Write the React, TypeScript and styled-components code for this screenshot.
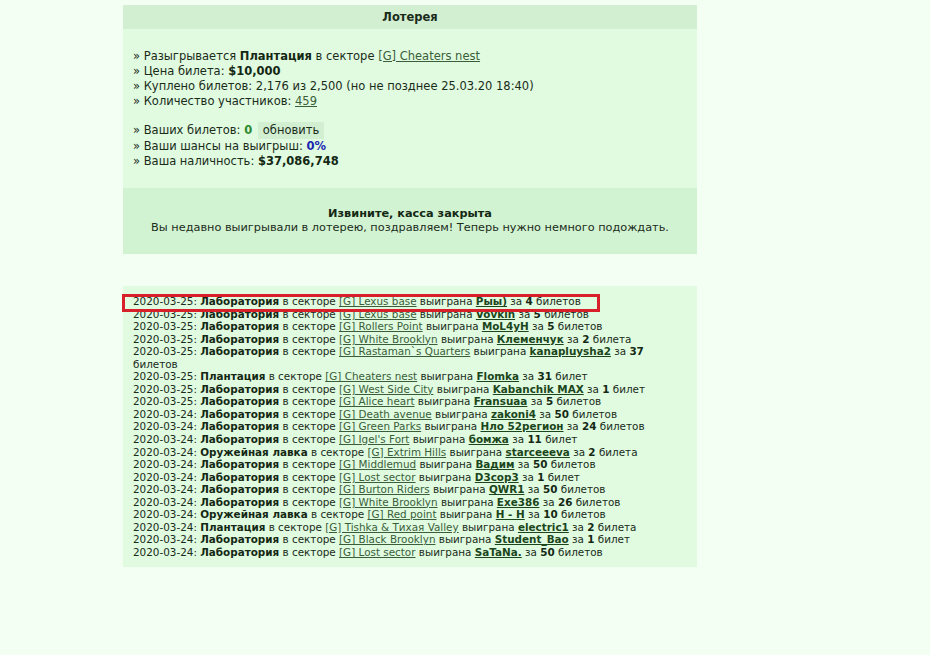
import styled, { createGlobalStyle } from "styled-components";

type Win = {
  date: string;
  building: string;
  sector: string;
  winner: string;
  tickets: number;
  word: string;
};

const wins: Win[] = [
  { date: "2020-03-25", building: "Лаборатория", sector: "[G] Lexus base", winner: "Рыы)", tickets: 4, word: "билетов" },
  { date: "2020-03-25", building: "Лаборатория", sector: "[G] Lexus base", winner: "Vovkin", tickets: 5, word: "билетов" },
  { date: "2020-03-25", building: "Лаборатория", sector: "[G] Rollers Point", winner: "MoL4yH", tickets: 5, word: "билетов" },
  { date: "2020-03-25", building: "Лаборатория", sector: "[G] White Brooklyn", winner: "Клеменчук", tickets: 2, word: "билета" },
  { date: "2020-03-25", building: "Лаборатория", sector: "[G] Rastaman`s Quarters", winner: "kanapluysha2", tickets: 37, word: "билетов" },
  { date: "2020-03-25", building: "Плантация", sector: "[G] Cheaters nest", winner: "Flomka", tickets: 31, word: "билет" },
  { date: "2020-03-25", building: "Лаборатория", sector: "[G] West Side City", winner: "Kabanchik MAX", tickets: 1, word: "билет" },
  { date: "2020-03-25", building: "Лаборатория", sector: "[G] Alice heart", winner: "Fransuaa", tickets: 5, word: "билетов" },
  { date: "2020-03-24", building: "Лаборатория", sector: "[G] Death avenue", winner: "zakoni4", tickets: 50, word: "билетов" },
  { date: "2020-03-24", building: "Лаборатория", sector: "[G] Green Parks", winner: "Нло 52регион", tickets: 24, word: "билетов" },
  { date: "2020-03-24", building: "Лаборатория", sector: "[G] Igel's Fort", winner: "бомжа", tickets: 11, word: "билет" },
  { date: "2020-03-24", building: "Оружейная лавка", sector: "[G] Extrim Hills", winner: "starceeeva", tickets: 2, word: "билета" },
  { date: "2020-03-24", building: "Лаборатория", sector: "[G] Middlemud", winner: "Вадим", tickets: 50, word: "билетов" },
  { date: "2020-03-24", building: "Лаборатория", sector: "[G] Lost sector", winner: "D3cop3", tickets: 1, word: "билет" },
  { date: "2020-03-24", building: "Лаборатория", sector: "[G] Burton Riders", winner: "QWR1", tickets: 50, word: "билетов" },
  { date: "2020-03-24", building: "Лаборатория", sector: "[G] White Brooklyn", winner: "Exe386", tickets: 26, word: "билетов" },
  { date: "2020-03-24", building: "Оружейная лавка", sector: "[G] Red point", winner: "H - H", tickets: 10, word: "билетов" },
  { date: "2020-03-24", building: "Плантация", sector: "[G] Tishka & Тихая Valley", winner: "electric1", tickets: 2, word: "билета" },
  { date: "2020-03-24", building: "Лаборатория", sector: "[G] Black Brooklyn", winner: "Student_Bao", tickets: 1, word: "билет" },
  { date: "2020-03-24", building: "Лаборатория", sector: "[G] Lost sector", winner: "SaTaNa.", tickets: 50, word: "билетов" },
];

const GlobalStyle = createGlobalStyle`
  body {
    margin: 0;
    background: #f4fff4;
    font-family: Verdana, "DejaVu Sans", sans-serif;
    color: #1a2b1a;
  }
`;

const Page = styled.div`
  width: 574px;
  margin: 5px 0 0 123px;
  display: flex;
  flex-direction: column;
  gap: 32px;
`;

const Panel = styled.div`
  background: #e0fbe0;
`;

const Header = styled.div`
  background: #d2efd2;
  height: 24px;
  line-height: 24px;
  text-align: center;
  font-weight: bold;
  font-size: 11.5px;
`;

const Info = styled.div`
  padding: 20px 10px 19px;
  font-size: 11.5px;
  line-height: 15px;
`;

const Gap = styled.div`
  height: 13px;
`;

const Line = styled.div<{ $tall?: boolean }>`
  line-height: ${(p) => (p.$tall ? "17px" : "inherit")};
`;

const Bold = styled.b<{ $color?: string }>`
  color: ${(p) => p.$color || "#142814"};
`;

const Link = styled.a<{ $strong?: boolean }>`
  color: ${(p) => (p.$strong ? "#1b461b" : "#3a5e3a")};
  font-weight: ${(p) => (p.$strong ? "bold" : "normal")};
  text-decoration: underline;
  cursor: pointer;
`;

const RefreshButton = styled.span`
  display: inline-block;
  background: #d2efd2;
  padding: 0 5px;
  margin-left: 2px;
  line-height: 17px;
`;

const Closed = styled.div`
  background: #d2f3d2;
  padding: 19px 10px;
  text-align: center;
  font-size: 11.3px;
  line-height: 14px;
`;

const ListPanel = styled(Panel)`
  position: relative;
  padding: 9px 10px;
  font-size: 10.4px;
  line-height: 12.55px;
`;

const Marker = styled.div`
  position: absolute;
  left: -1px;
  top: 8px;
  width: 478px;
  height: 18px;
  border: 3px solid #d8202a;
  box-sizing: border-box;
  pointer-events: none;
`;

const Row = styled.div``;

export default function App() {
  return (
    <>
      <GlobalStyle />
      <Page>
        <Panel>
          <Header>Лотерея</Header>
          <Info>
            <Line>
              » Разыгрывается <Bold>Плантация</Bold> в секторе <Link>[G] Cheaters nest</Link>
            </Line>
            <Line>
              » Цена билета: <Bold>$10,000</Bold>
            </Line>
            <Line>» Куплено билетов: 2,176 из 2,500 (но не позднее 25.03.20 18:40)</Line>
            <Line>
              » Количество участников: <Link>459</Link>
            </Line>
            <Gap />
            <Line $tall>
              » Ваших билетов: <Bold $color="#2f8a2f">0</Bold> <RefreshButton>обновить</RefreshButton>
            </Line>
            <Line>
              » Ваши шансы на выигрыш: <Bold $color="#1a28b0">0%</Bold>
            </Line>
            <Line>
              » Ваша наличность: <Bold>$37,086,748</Bold>
            </Line>
          </Info>
          <Closed>
            <Bold>Извините, касса закрыта</Bold>
            <Line>Вы недавно выигрывали в лотерею, поздравляем! Теперь нужно немного подождать.</Line>
          </Closed>
        </Panel>

        <ListPanel>
          {wins.map((w, i) => (
            <Row key={i}>
              {w.date}: <Bold>{w.building}</Bold> в секторе <Link>{w.sector}</Link> выиграна{" "}
              <Link $strong>{w.winner}</Link> за <Bold>{w.tickets}</Bold> {w.word}
            </Row>
          ))}
          <Marker />
        </ListPanel>
      </Page>
    </>
  );
}
